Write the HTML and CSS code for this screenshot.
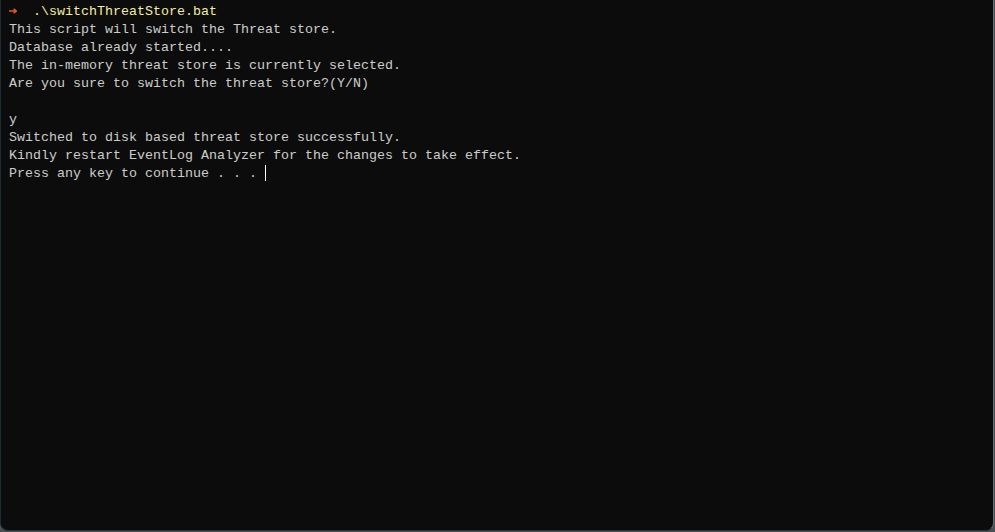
FILE: index.html
```html
<!DOCTYPE html>
<html>
<head>
<meta charset="utf-8">
<link rel="stylesheet" href="styles.css">
</head>
<body>
<div class="window">
<div class="term">
<div class="line"><svg class="arrow" width="8" height="6" viewBox="0 0 8 6"><path d="M0 3H7M4.6 0.8L7.3 3L4.6 5.2" stroke="#e4561f" stroke-width="1.5" fill="none"/></svg>  <span class="cmd">.\switchThreatStore.bat</span></div>
<div class="line">This script will switch the Threat store.</div>
<div class="line">Database already started....</div>
<div class="line">The in-memory threat store is currently selected.</div>
<div class="line">Are you sure to switch the threat store?(Y/N)</div>
<div class="line"> </div>
<div class="line">y</div>
<div class="line">Switched to disk based threat store successfully.</div>
<div class="line">Kindly restart EventLog Analyzer for the changes to take effect.</div>
<div class="line">Press any key to continue . . . <span class="cursor"></span></div>
</div>
</div>
</body>
</html>
```

FILE: styles.css
```css
html, body {
  margin: 0;
  padding: 0;
  background: #4a4f55;
  width: 995px;
  height: 532px;
  overflow: hidden;
}
.window {
  box-sizing: border-box;
  width: 994px;
  height: 531px;
  background: #0c0c0c;
  border-left: 1px solid #1d2c33;
  border-right: 1px solid #6b6e72;
  border-bottom: 1px solid #2a3438;
  border-bottom-left-radius: 8px;
  border-bottom-right-radius: 8px;
  padding: 3px 0 0 8px;
}
.term {
  font-family: "Liberation Mono", "DejaVu Sans Mono", monospace;
  font-size: 13.333px;
  line-height: 18px;
  color: #cccccc;
}
.line {
  height: 18px;
  white-space: pre;
}
.arrow {
  vertical-align: 1px;
}
.cmd {
  color: #f5ee9f;
}
.cursor {
  display: inline-block;
  width: 1px;
  height: 16px;
  background: #ffffff;
  vertical-align: -4px;
}
```
